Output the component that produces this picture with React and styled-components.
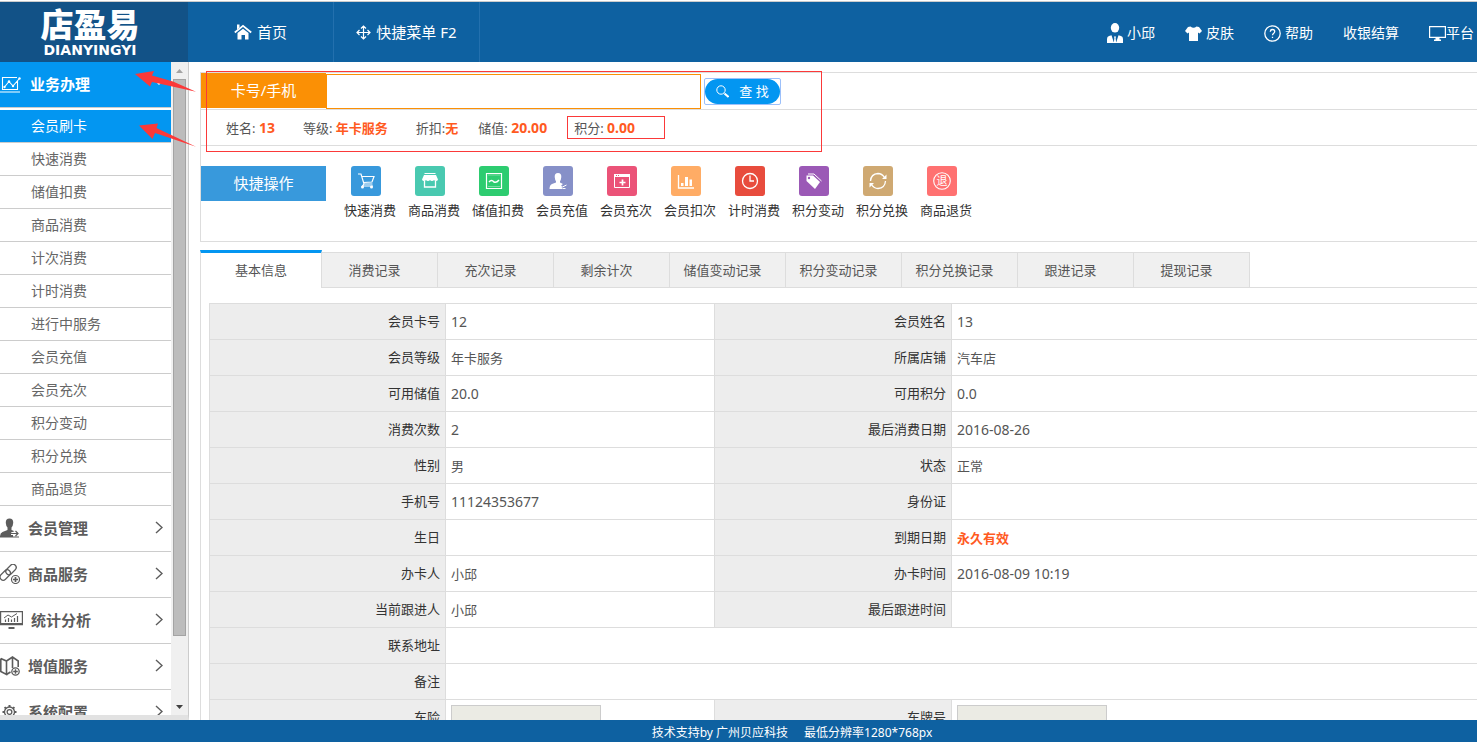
import React from "react";
import styled, { createGlobalStyle } from "styled-components";

const GlobalStyle = createGlobalStyle`
  * {
    box-sizing: border-box;
  }

  body {
    margin: 0;
    background: #fff;
    color: #555;
    font: 13px/20px "Noto Sans", "Noto Sans CJK SC", sans-serif;
  }

  a {
    color: inherit;
    text-decoration: none;
  }

  button,
  input {
    font: inherit;
  }

  ul {
    margin: 0;
    padding: 0;
    list-style: none;
  }

  svg {
    display: block;
    flex: none;
  }
`;

const Page = styled.div`
  position: relative;
  display: flex;
  flex-direction: column;
  height: 100vh;
  overflow: hidden;
`;

/* header */

const Header = styled.header`
  display: flex;
  flex: none;
  height: 61px;
  margin-top: 1px;
  border-top: 1px solid #ccc;
  background: #0e61a1;
  color: #fff;
`;

const Logo = styled.a`
  display: flex;
  flex-direction: column;
  align-items: center;
  gap: 3px;
  width: 188px;
  padding-top: 4px;
  padding-right: 8px;
  background: #125287;
`;

const LogoName = styled.span`
  font-family: "Noto Sans CJK SC", sans-serif;
  font-size: 33px;
  font-weight: 900;
  line-height: 34px;
`;

const LogoLatin = styled.span`
  font: bold 14px/14px "DejaVu Sans", sans-serif;
`;

const Nav = styled.nav`
  display: flex;
  flex: 1;
`;

const NavItem = styled.a`
  display: flex;
  align-items: center;
  justify-content: center;
  gap: 5px;
  width: 146px;
  border-right: 1px solid #2370ae;
  font-size: 15px;
`;

const UserNav = styled.nav`
  display: flex;
  gap: 30px;
  padding-right: 3px;
`;

const UserLink = styled.a`
  display: flex;
  align-items: center;
  gap: ${(p) => (p.$joined ? 0 : "4px")};
  padding-top: 2px;
  font-size: 14px;
  white-space: nowrap;
`;

/* body */

const Body = styled.div`
  display: flex;
  flex: 1;
  min-height: 0;
`;

const Sidebar = styled.aside`
  display: flex;
  flex: none;
  width: 189px;
  border-right: 1px solid #ccc;
  border-bottom: 5px solid #e2e2e2;
`;

const Menu = styled.nav`
  flex: 1;
  overflow: hidden;
`;

const Group = styled.a`
  display: flex;
  align-items: center;
  gap: 8px;
  height: 46px;
  padding: 0 8px 2px 0;
  border-bottom: 1px solid #ccc;
  background: ${(p) => (p.$open ? "#0396f1" : "#fff")};
  color: ${(p) => (p.$open ? "#fff" : "#5c5c5c")};
  font-size: 15px;
  font-weight: bold;

  span {
    flex: 1;
  }
`;

const SubMenu = styled.ul`
  padding-top: 2px;
`;

const SubItem = styled.a`
  display: block;
  height: 33px;
  padding-left: 31px;
  border-bottom: 1px solid #ccc;
  background: ${(p) => (p.$active ? "#0396f1" : "#fff")};
  color: ${(p) => (p.$active ? "#fff" : "#666")};
  font-size: 14px;
  line-height: 32px;
`;

const ScrollBar = styled.div`
  display: flex;
  flex-direction: column;
  width: 17px;
  background: #f0f0f0;
`;

const ScrollArrow = styled.div`
  display: flex;
  align-items: center;
  justify-content: center;
  height: 17px;
  color: ${(p) => (p.$off ? "#a3a3a3" : "#404040")};
`;

const ScrollTrack = styled.div`
  flex: 1;
  padding: 0 2px;
`;

const ScrollThumb = styled.div`
  height: 90%;
  border: 1px solid #a3a3a3;
  background: #bcbcbc;
`;

const Main = styled.main`
  flex: 1;
  min-width: 0;
  padding: 10px 0 0 11px;
  overflow: hidden;
`;

const Panel = styled.section`
  margin-bottom: 8px;
  border: 1px solid #ddd;
  border-right: 0;
`;

const SearchRow = styled.form`
  display: flex;
  height: 37px;
  border-bottom: 1px solid #ddd;
`;

const SearchLabel = styled.label`
  width: 125px;
  height: 35px;
  background: #fb9005;
  color: #fff;
  font-size: 15px;
  line-height: 35px;
  text-align: center;
`;

const SearchInput = styled.input`
  align-self: flex-end;
  width: 375px;
  height: 35px;
  padding: 0 8px;
  border: 1px solid #fb9005;
  outline: 0;
`;

const FocusFrame = styled.span`
  align-self: center;
  margin-left: 3px;
  border: 1px solid #9cc0fa;
  border-radius: 2px;
`;

const SearchButton = styled.button`
  display: flex;
  align-items: center;
  justify-content: center;
  gap: 10px;
  width: 75px;
  height: 25px;
  padding: 0;
  border: 0;
  border-radius: 13px;
  background: #0396f1;
  color: #fff;
`;

const InfoRow = styled.div`
  display: flex;
  align-items: center;
  height: 36px;
  padding-left: 25px;
  border-bottom: 1px solid #ddd;
`;

const Info = styled.span`
  margin-right: ${(p) => (p.$near ? "20px" : "28px")};
  white-space: pre;
  ${(p) => p.$boxed && "padding: 1px 29px 0 6px; border: 1px solid #fb3939;"}
`;

const Value = styled.b`
  color: #ff5a1f;
  font-size: ${(p) => (p.$digits ? "14px" : "13px")};
`;

const QuickRow = styled.div`
  display: flex;
  padding: 20px 0 16px;
`;

const QuickTitle = styled.h2`
  width: 125px;
  height: 35px;
  margin: 0 18px 0 0;
  background: #3899dc;
  color: #fff;
  font-size: 15px;
  font-weight: normal;
  line-height: 35px;
  text-align: center;
`;

const Quick = styled.a`
  width: 64px;
  color: #333;
  line-height: 29px;
  white-space: nowrap;
`;

const Tile = styled.span`
  display: flex;
  align-items: center;
  justify-content: center;
  width: 30px;
  height: 30px;
  margin-left: 7px;
  border-radius: 3px;
  background: ${(p) => p.$color};
  color: #fff;
`;

const TabBar = styled.div`
  display: flex;
  align-items: flex-end;

  &::after {
    content: "";
    flex: 1;
    border-bottom: 1px solid #ddd;
  }
`;

const Tab = styled.button`
  width: 116px;
  height: 36px;
  padding: 0 10px 0 0;
  border: solid #ddd;
  border-width: 1px 1px 1px 0;
  background: #f0f0f0;
  color: #555;

  &[aria-selected="true"] {
    width: 122px;
    height: 38px;
    padding: 0 0 2px;
    border-width: 3px 1px 0;
    border-top-color: #0396f1;
    background: #fff;
  }
`;

const TabPanel = styled.section`
  padding: 15px 0 0 8px;
  border-left: 1px solid #ddd;
`;

const Table = styled.table`
  width: 100%;
  border: solid #ddd;
  border-width: 1px 0 0 1px;
  border-spacing: 0;
  table-layout: fixed;
`;

const Th = styled.th`
  width: ${(p) => p.$width};
  height: 36px;
  padding: 0 5px 2px;
  border: solid #ddd;
  border-width: 0 1px 1px 0;
  background: #ededed;
  color: #333;
  font-weight: normal;
  text-align: right;
`;

const Td = styled.td`
  width: ${(p) => p.$width};
  padding: 0 5px;
  border: solid #ddd;
  border-width: 0 1px 1px 0;
  font-size: ${(p) => (p.$digits ? "14px" : "13px")};

  &:last-child {
    border-right: 0;
  }
`;

const Field = styled.input`
  display: block;
  width: 150px;
  height: 26px;
  border: 1px solid #ccc;
  background: #ebebe4;
`;

const Footer = styled.footer`
  display: flex;
  flex: none;
  justify-content: center;
  gap: 16px;
  height: 22px;
  padding-top: 3px;
  padding-left: 107px;
  background: #0e61a1;
  color: #fff;
  font-size: 12px;
`;

/* marks drawn over the page */

const MarkBox = styled.div`
  position: absolute;
  top: 71px;
  left: 206px;
  width: 616px;
  height: 81px;
  border: 1px solid #fb3939;
  pointer-events: none;
`;

const MarkArrows = styled.svg`
  position: absolute;
  top: 62px;
  left: 125px;
  pointer-events: none;
`;

const Svg = ({ w = 20, h = w, sw = 1, children }) => (
  <svg
    width={w}
    height={h}
    viewBox={`0 0 ${w} ${h}`}
    fill="none"
    stroke="currentColor"
    strokeWidth={sw}
    aria-hidden="true"
  >
    {children}
  </svg>
);

const icons = {
  home: (
    <Svg w={18} h={16}>
      <path d="M.8 8.5 9 1.800l8.200 6.700" strokeWidth="1.8" />
      <path d="M3 .5h2.500v3L3 5.500z" fill="currentColor" stroke="none" />
      <path d="M3.500 9 9 4.800 14.500 9v6.500H11V11H7.500v4.500h-4z" fill="currentColor" stroke="none" />
    </Svg>
  ),
  move: (
    <Svg w={15} sw={1.2}>
      <path d="M7.5 1v13M1 7.5h13M5 3.5 7.5 1 10 3.5M5 11.500 7.5 14l2.500-2.500M3.500 5 1 7.500 3.500 10M11.500 5 14 7.500 11.500 10" />
    </Svg>
  ),
  user: (
    <Svg w={16} h={20}>
      <g fill="currentColor" stroke="none">
        <ellipse cx="8" cy="4.800" rx="4.200" ry="4.800" />
        <path d="M0 20v-4q0-2.500 2-3l2.500-.8L7 20zM16 20v-4q0-2.500-2-3l-2.500-.8L9 20zM6.900 13.500h2.200l-.5 1.500.6 5H6.800l.6-5z" />
      </g>
    </Svg>
  ),
  shirt: (
    <Svg w={17} h={15}>
      <path d="M5.500.5Q8.500 3 11.500.5L14 1l3 4-2.500 2.500-1.500-1V15H4V6.500l-1.500 1L0 5l3-4z" fill="currentColor" stroke="none" />
    </Svg>
  ),
  help: (
    <Svg w={17} sw={1.3}>
      <circle cx="8.5" cy="8.5" r="7.7" />
      <path d="M6.300 6.800q0-2.300 2.200-2.300t2.200 2q0 1-1.200 1.900-1 .8-1 1.900M8.500 11.700v1.300" />
    </Svg>
  ),
  screen: (
    <Svg w={17} h={16} sw={1.2}>
      <path d="M.6 1.600h15.800v10.800H.6z" />
      <path d="M6.500 12.500h4v2h1.500v1.500H5v-1.500h1.500z" fill="currentColor" stroke="none" />
    </Svg>
  ),
  business: (
    <Svg w={22} h={18} sw={1.1}>
      <path d="M17 2.500H2.500v12h15V6M0 17h20M4.500 12 9 6.500l4 4.500 6-7" />
      <g fill="currentColor" stroke="none">
        <circle cx="4.500" cy="12" r="1.200" />
        <circle cx="9" cy="6.500" r="1.200" />
        <circle cx="13" cy="11" r="1.200" />
        <circle cx="19.500" cy="3.500" r="1.200" />
      </g>
    </Svg>
  ),
  member: (
    <Svg w={20}>
      <path d="M9.500.5q4 0 3.700 4.500-.2 3-1.700 4.500v2.500l3 1.200-3.500 1.300v2.500h2V19.500H0q-.2-4.500 2.500-5.500l5-2V9.500Q6 8 5.800 5 5.500.5 9.500.5z" fill="currentColor" stroke="none" />
      <path d="M11 15.500h7M15.500 13l2.500 2.500-2.500 2.500M19 19h-6" strokeWidth="1.2" />
    </Svg>
  ),
  goods: (
    <Svg w={20} sw={1.2}>
      <rect x="-6" y="-3.200" width="12" height="6.400" rx="3.200" transform="translate(11 5.500) rotate(-45)" />
      <rect x="-6" y="-3.200" width="12" height="6.400" rx="3.200" transform="translate(5.200 11) rotate(-45)" />
      <circle cx="15.500" cy="15.500" r="4" fill="#fff" />
      <path d="M15.500 13v5M13 15.500h5" strokeWidth="1.7" />
    </Svg>
  ),
  stats: (
    <Svg w={23} h={19} sw={1.2}>
      <path d="M.6 1.600h21.800v13H.6z" />
      <path d="M1 14h21" strokeWidth="2" />
      <path d="M5.500 12V9.500M8.500 12V8M11.500 12V9.500M14.500 12V8M17.500 12V6" />
      <path d="M4 8 8 5l3.500 2L17 3.500" strokeWidth="1" />
      <path d="M8.500 17h6v2h-6z" fill="currentColor" stroke="none" />
    </Svg>
  ),
  extra: (
    <Svg w={20} sw={1.6}>
      <path d="M.8 2.500 6.500 5l6-4 5.700 4v6M6.500 5v13.500L.8 15.500v-13M12.500 1v11M6.500 18.500l4-2.500" />
      <circle cx="15.500" cy="15.500" r="3.700" fill="#fff" strokeWidth="1.3" />
      <path d="M15.500 13.200v4.600M13.200 15.500h4.600" strokeWidth="1.4" />
    </Svg>
  ),
  gear: (
    <Svg w={20} sw={1.3}>
      <circle cx="9.500" cy="10" r="2.400" />
      <circle cx="9.500" cy="10" r="5" />
      <path d="M9.500 3v2M9.500 15v2M2.500 10h2M14.500 10h2M4.600 5.100 6 6.500M13 13.500l1.400 1.400M4.600 14.900 6 13.500M13 6.500l1.400-1.400" strokeWidth="2" />
    </Svg>
  ),
  search: (
    <Svg w={13}>
      <circle cx="5" cy="5" r="4.200" />
      <path d="m8.500 8.500 4 3.500" strokeWidth="2" />
    </Svg>
  ),
  cart: (
    <Svg w={18} sw={1.2}>
      <path d="M1 2h3l3 10h8.500M5 4.500h12l-2 5.500-8.500.5M7 12l-1.500 2H16" />
      <g fill="currentColor" stroke="none">
        <circle cx="5.500" cy="15" r="1.500" />
        <circle cx="14.500" cy="15" r="1.500" />
      </g>
    </Svg>
  ),
  shop: (
    <Svg w={18}>
      <path d="M3.500 1.500h11" />
      <path d="M3 3h12l2 4.500q-.5 1.500-2 1.500t-2-1q-.6 1-2 1t-2-1q-.6 1-2 1T5 8q-.5 1-2 1T1 7.500z" fill="currentColor" stroke="none" />
      <path d="M3.500 9v6h11V9" strokeWidth="1.3" />
    </Svg>
  ),
  value: (
    <Svg w={18} sw={1.2}>
      <path d="M1.500 1.500h15v15h-15z" />
      <path d="M4 10q2.500-3 5 0 2.500 1 5-2" strokeWidth="1.5" />
      <path d="M3 3h12M3 14.500h12" opacity=".35" />
    </Svg>
  ),
  recharge: (
    <Svg w={18}>
      <path d="M9 1q3.500 0 3.300 4Q12 8 11 9.200v1.300l3 1.500-2 1.500 1.500 3.500H.5q0-4 2.500-5l4-1.500V9.200Q6 8 5.700 5 5.500 1 9 1z" fill="currentColor" stroke="none" />
      <path d="m11.500 13.500 2 1.500 4-2M13.500 16.500h3" />
    </Svg>
  ),
  calendar: (
    <Svg w={18}>
      <path d="M1.500 2.500h15v13h-15z" />
      <path d="M1 2h16v3H1z" fill="currentColor" stroke="none" />
      <path d="M3 3.500h1M5 3.500h1" stroke="#eb5378" />
      <path d="M9.500 7.500v6M6.500 10.500h6" strokeWidth="1.7" />
    </Svg>
  ),
  bars: (
    <Svg w={18}>
      <path d="M1.500 3v13H17" strokeWidth="1.3" />
      <path d="M4 11h2.500v3H4zM8 5h3v9H8zM12.500 7.500h2.500v6.500h-2.500z" fill="currentColor" stroke="none" />
    </Svg>
  ),
  clock: (
    <Svg w={18} sw={1.3}>
      <circle cx="9" cy="9" r="7.5" />
      <path d="M9 3.500V9h4" />
    </Svg>
  ),
  tag: (
    <Svg w={18}>
      <path d="M1.500 3.500H8l7 6.500-5 7-8.500-8z" fill="currentColor" stroke="none" />
      <circle cx="4" cy="6" r="1.2" fill="#9b59b6" stroke="none" />
      <path d="M3 2h6l7.500 7" />
    </Svg>
  ),
  swap: (
    <Svg w={18} sw={1.3}>
      <path d="M1.500 9Q2 2 9 1.500q4 0 6.500 4M16.500 9Q16 16 9 16.500q-4 0-6.500-4" />
      <path d="M17.500 2.500V7H13zM.5 15.500V11H5z" fill="currentColor" stroke="none" />
    </Svg>
  ),
  refund: (
    <Svg w={18} sw={1.1}>
      <circle cx="9" cy="9" r="8.3" />
      <text x="9" y="13" fontSize="11" textAnchor="middle" fill="currentColor" stroke="none">
        退
      </text>
    </Svg>
  ),
  right: (
    <Svg w={8} h={14} sw={1.4}>
      <path d="m1 1 6 5.500L1 12" />
    </Svg>
  ),
  down: (
    <Svg w={8} h={14} sw={1.5}>
      <path d="m1 4 3 3 3-3" />
    </Svg>
  ),
  scrollUp: (
    <Svg w={7} h={4}>
      <path d="M0 4h7L3.500 0z" fill="currentColor" stroke="none" />
    </Svg>
  ),
  scrollDown: (
    <Svg w={7} h={4}>
      <path d="M0 0h7L3.500 4z" fill="currentColor" stroke="none" />
    </Svg>
  ),
};

const subItems = [
  "会员刷卡",
  "快速消费",
  "储值扣费",
  "商品消费",
  "计次消费",
  "计时消费",
  "进行中服务",
  "会员充值",
  "会员充次",
  "积分变动",
  "积分兑换",
  "商品退货",
];

const groups = [
  ["member", "会员管理"],
  ["goods", "商品服务"],
  ["stats", "统计分析"],
  ["extra", "增值服务"],
  ["gear", "系统配置"],
];

const userLinks = [
  ["user", "小邱"],
  ["shirt", "皮肤"],
  ["help", "帮助"],
  [null, "收银结算"],
  ["screen", "平台"],
];

const quicks = [
  ["cart", "快速消费", "#3899dc"],
  ["shop", "商品消费", "#49c9b0"],
  ["value", "储值扣费", "#2dcc70"],
  ["recharge", "会员充值", "#8690c8"],
  ["calendar", "会员充次", "#eb5378"],
  ["bars", "会员扣次", "#ffac65"],
  ["clock", "计时消费", "#e84c3d"],
  ["tag", "积分变动", "#9b59b6"],
  ["swap", "积分兑换", "#cfa972"],
  ["refund", "商品退货", "#ff7171"],
];

const tabs = [
  "基本信息",
  "消费记录",
  "充次记录",
  "剩余计次",
  "储值变动记录",
  "积分变动记录",
  "积分兑换记录",
  "跟进记录",
  "提现记录",
];

const rows = [
  ["会员卡号", "12", "会员姓名", "13"],
  ["会员等级", "年卡服务", "所属店铺", "汽车店"],
  ["可用储值", "20.0", "可用积分", "0.0"],
  ["消费次数", "2", "最后消费日期", "2016-08-26"],
  ["性别", "男", "状态", "正常"],
  ["手机号", "11124353677", "身份证", ""],
  ["生日", "", "到期日期", <Value key="v">永久有效</Value>],
  ["办卡人", "小邱", "办卡时间", "2016-08-09 10:19"],
  ["当前跟进人", "小邱", "最后跟进时间", ""],
];

const isDigits = (text) => /^[\d.:\- ]+$/.test(text);

function SideMenu() {
  return (
    <Sidebar>
      <Menu>
        <Group href="#" $open>
          {icons.business}
          <span>业务办理</span>
          {icons.down}
        </Group>
        <SubMenu>
          {subItems.map((text, i) => (
            <li key={text}>
              <SubItem href="#" $active={i === 0}>
                {text}
              </SubItem>
            </li>
          ))}
        </SubMenu>
        {groups.map(([icon, text]) => (
          <Group href="#" key={text}>
            {icons[icon]}
            <span>{text}</span>
            {icons.right}
          </Group>
        ))}
      </Menu>
      <ScrollBar>
        <ScrollArrow $off>{icons.scrollUp}</ScrollArrow>
        <ScrollTrack>
          <ScrollThumb />
        </ScrollTrack>
        <ScrollArrow>{icons.scrollDown}</ScrollArrow>
      </ScrollBar>
    </Sidebar>
  );
}

function MemberTable() {
  return (
    <Table>
      <tbody>
        {rows.map(([nameA, valueA, nameB, valueB]) => (
          <tr key={nameA}>
            <Th scope="row" $width="236px">{nameA}</Th>
            <Td $width="269px" $digits={isDigits(valueA)}>{valueA}</Td>
            <Th scope="row" $width="237px">{nameB}</Th>
            <Td $digits={isDigits(valueB)}>{valueB}</Td>
          </tr>
        ))}
        <tr>
          <Th scope="row">联系地址</Th>
          <Td colSpan={3} />
        </tr>
        <tr>
          <Th scope="row">备注</Th>
          <Td colSpan={3} />
        </tr>
        <tr>
          <Th scope="row">
            <label htmlFor="insurance">车险</label>
          </Th>
          <Td>
            <Field id="insurance" disabled />
          </Td>
          <Th scope="row">
            <label htmlFor="plate">车牌号</label>
          </Th>
          <Td>
            <Field id="plate" disabled />
          </Td>
        </tr>
      </tbody>
    </Table>
  );
}

function App() {
  return (
    <Page>
      <GlobalStyle />
      <Header>
        <Logo href="#">
          <LogoName>店盈易</LogoName>
          <LogoLatin>DIANYINGYI</LogoLatin>
        </Logo>
        <Nav>
          <NavItem href="#">{icons.home}首页</NavItem>
          <NavItem href="#">{icons.move}快捷菜单 F2</NavItem>
        </Nav>
        <UserNav>
          {userLinks.map(([icon, text]) => (
            <UserLink href="#" key={text} $joined={icon === "screen"}>
              {icon && icons[icon]}
              {text}
            </UserLink>
          ))}
        </UserNav>
      </Header>
      <Body>
        <SideMenu />
        <Main>
          <Panel>
            <SearchRow onSubmit={(e) => e.preventDefault()}>
              <SearchLabel htmlFor="card">卡号/手机</SearchLabel>
              <SearchInput id="card" />
              <FocusFrame>
                <SearchButton>{icons.search}查 找</SearchButton>
              </FocusFrame>
            </SearchRow>
            <InfoRow>
              <Info>姓名: <Value $digits>13</Value></Info>
              <Info>等级: <Value>年卡服务</Value></Info>
              <Info $near>折扣:<Value>无</Value></Info>
              <Info $near>储值: <Value $digits>20.00</Value></Info>
              <Info $boxed>积分: <Value $digits>0.00</Value></Info>
            </InfoRow>
            <QuickRow>
              <QuickTitle>快捷操作</QuickTitle>
              {quicks.map(([icon, text, color]) => (
                <Quick href="#" key={text}>
                  <Tile $color={color}>{icons[icon]}</Tile>
                  {text}
                </Quick>
              ))}
            </QuickRow>
          </Panel>
          <TabBar role="tablist">
            {tabs.map((text, i) => (
              <Tab key={text} role="tab" aria-selected={i === 0}>
                {text}
              </Tab>
            ))}
          </TabBar>
          <TabPanel role="tabpanel">
            <MemberTable />
          </TabPanel>
        </Main>
      </Body>
      <Footer>
        <span>技术支持by 广州贝应科技</span>
        <span>最低分辨率1280*768px</span>
      </Footer>
      <MarkBox />
      <MarkArrows width="72" height="88" fill="#fb3939" aria-hidden="true">
        <path d="M10 12 29 9l-2 4.500L48 19.500 71 29.700 27 20l-2 4.500z" />
        <path d="m14 63.500 19-2-1.500 4.500L71 84.700 30 71l-2.500 6z" />
      </MarkArrows>
    </Page>
  );
}

export default App;
